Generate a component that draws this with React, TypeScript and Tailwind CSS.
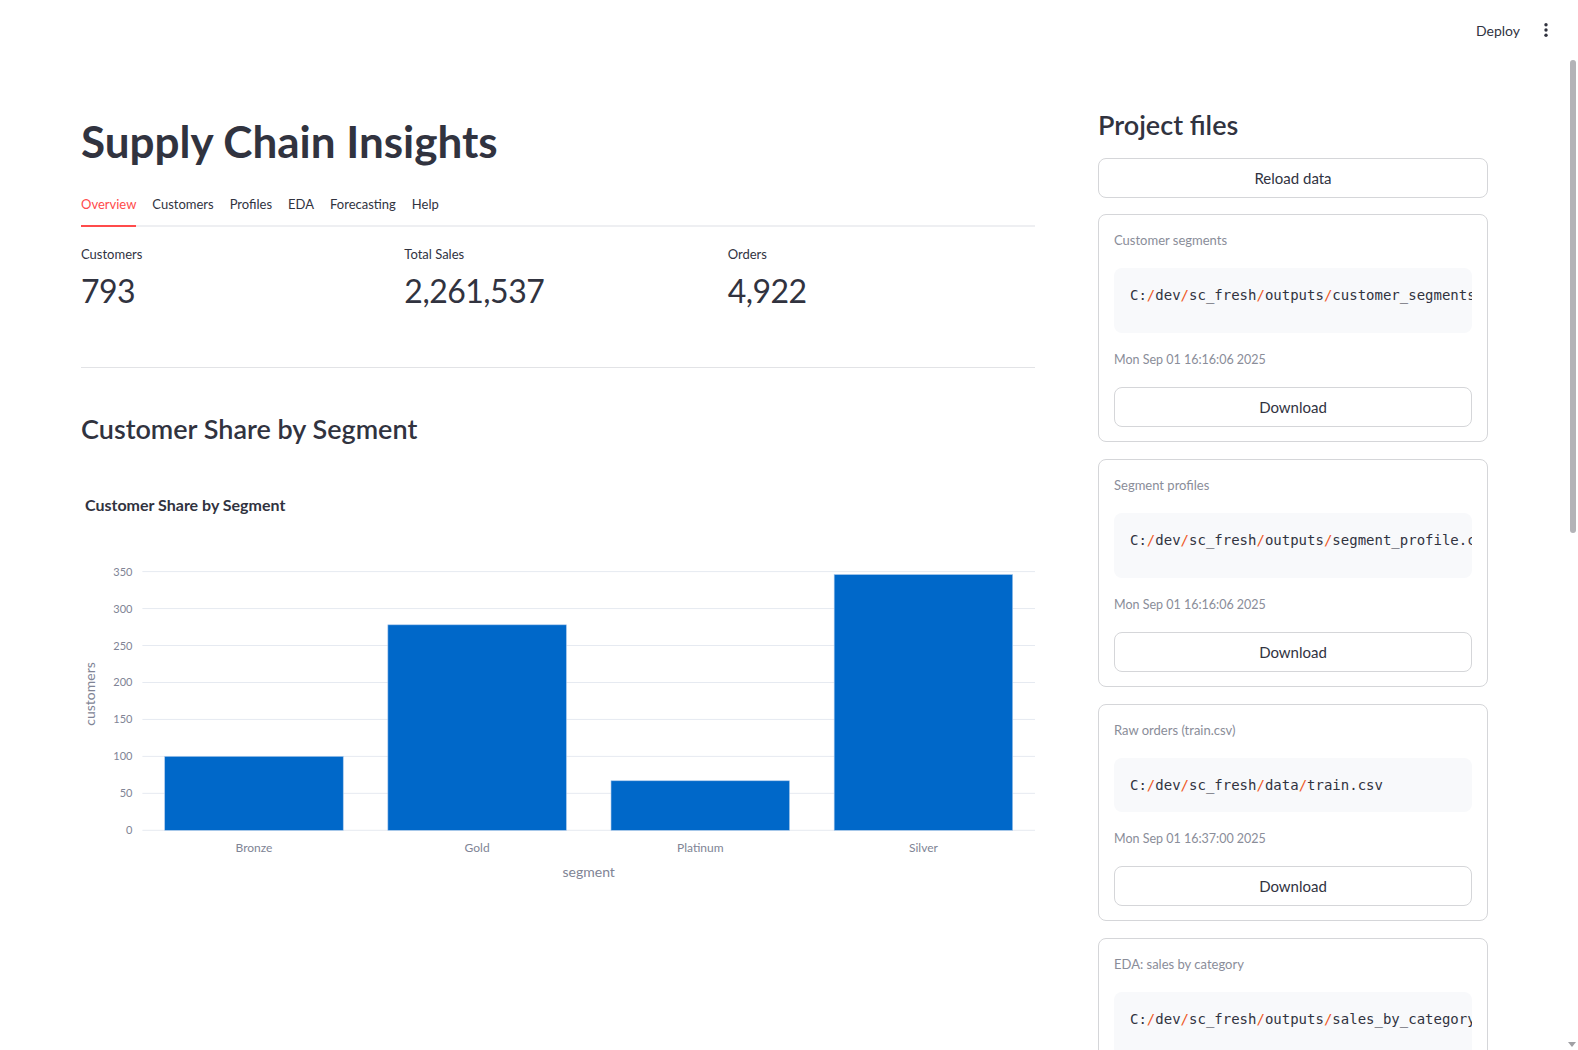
import { useState } from "react";

const sans = { fontFamily: '"Source Sans Pro", Lato, "Noto Sans", sans-serif' };
const mono = { fontFamily: '"DejaVu Sans Mono", "Liberation Mono", monospace' };

const tabs = ["Overview", "Customers", "Profiles", "EDA", "Forecasting", "Help"];

const metrics = [
    { label: "Customers", value: "793" },
    { label: "Total Sales", value: "2,261,537" },
    { label: "Orders", value: "4,922" },
];

const segments = [
    { name: "Bronze", count: 100 },
    { name: "Gold", count: 278 },
    { name: "Platinum", count: 67 },
    { name: "Silver", count: 346 },
];

const files = [
    { title: "Customer segments", path: "C:/dev/sc_fresh/outputs/customer_segments.csv", date: "Mon Sep 01 16:16:06 2025", scroll: true },
    { title: "Segment profiles", path: "C:/dev/sc_fresh/outputs/segment_profile.csv", date: "Mon Sep 01 16:16:06 2025", scroll: true },
    { title: "Raw orders (train.csv)", path: "C:/dev/sc_fresh/data/train.csv", date: "Mon Sep 01 16:37:00 2025", scroll: false },
    { title: "EDA: sales by category", path: "C:/dev/sc_fresh/outputs/sales_by_category.csv", date: "Mon Sep 01 16:16:06 2025", scroll: true },
];

// slashes in the path get the orange highlight
const PathText = ({ path }: { path: string }) => {
    const parts = path.split("/");
    return (
        <>
            {parts.map((p, i) => (
                <span key={i}>
                    {i > 0 && <span className="text-[#ef5a28]">/</span>}
                    {p}
                </span>
            ))}
        </>
    );
};

const Chart = () => {
    const base = 350.3;
    const scale = 258.7 / 350;
    const left = 61.4;
    const band = (954 - left) / 4;
    const ticks = [0, 50, 100, 150, 200, 250, 300, 350];
    return (
        <svg width="954" height="410" className="block" style={sans}>
            <text x="4" y="31" fontSize="16" fontWeight="700" fill="#31333f">Customer Share by Segment</text>
            {ticks.map((t) => (
                <g key={t}>
                    <line x1={left} x2="954" y1={base - t * scale} y2={base - t * scale} stroke="#e6eaf1" strokeWidth="1" />
                    <text x="51.5" y={base - t * scale + 4} fontSize="11" fill="#808495" textAnchor="end">{t}</text>
                </g>
            ))}
            {segments.map((s, i) => {
                const x = left + i * band + band * 0.1;
                const h = s.count * scale;
                return (
                    <g key={s.name}>
                        <rect x={x} y={base - h} width={band * 0.8} height={h} fill="#0068c9" stroke="#a8c8ec" strokeWidth="0.6" />
                        <text x={left + i * band + band / 2} y="371.5" fontSize="12" fill="#808495" textAnchor="middle">{s.name}</text>
                    </g>
                );
            })}
            <text x={(left + 954) / 2} y="396.5" fontSize="14" fill="#808495" textAnchor="middle">segment</text>
            <text transform="translate(14 214) rotate(-90)" fontSize="14" fill="#808495" textAnchor="middle">customers</text>
        </svg>
    );
};

const App = () => {
    const [active, setActive] = useState(0);
    return (
        <div className="relative h-[1050px] overflow-hidden bg-white text-[#31333f]" style={sans}>
            <header className="flex h-[60px] items-center justify-end gap-[24px] pr-[30px]">
                <span className="text-[14px]">Deploy</span>
                <svg width="4" height="14" viewBox="0 0 4 14">
                    <circle cx="2" cy="1.8" r="1.7" fill="#31333f" />
                    <circle cx="2" cy="7" r="1.7" fill="#31333f" />
                    <circle cx="2" cy="12.2" r="1.7" fill="#31333f" />
                </svg>
            </header>

            <div className="flex gap-[63px] pl-[81px]">
                <main className="w-[954px]">
                    <h1 className="mt-[55px] text-[44px] font-bold leading-[53px]">Supply Chain Insights</h1>
                    <div className="mt-[26px] flex gap-4 border-b-2 border-[#eeeff2]">
                        {tabs.map((t, i) => (
                            <button
                                key={t}
                                onClick={() => setActive(i)}
                                className={`-mb-[2px] border-b-2 pb-[11px] text-[13px] leading-[20px] ${i === active ? "border-[#ff4b4b] text-[#ff4b4b]" : "border-transparent text-[#31333f]"}`}
                            >
                                {t}
                            </button>
                        ))}
                    </div>
                    <div className="mt-[15px] grid grid-cols-3 gap-4">
                        {metrics.map((m) => (
                            <div key={m.label}>
                                <div className="text-[13px] leading-[24px]">{m.label}</div>
                                <div className="mt-[1px] text-[32px] leading-[48px] tracking-[-0.5px]">{m.value}</div>
                            </div>
                        ))}
                    </div>
                    <hr className="mt-[52px] border-t border-[#e2e3e6]" />
                    <h3 className="mt-[43px] text-[27px] font-semibold leading-[36px]">Customer Share by Segment</h3>
                    <div className="mt-[33px]">
                        <Chart />
                    </div>
                </main>

                <aside className="w-[390px]">
                    <h2 className="mt-[45px] text-[27px] font-semibold leading-[40px]">Project files</h2>
                    <button className="mt-[13px] flex h-[40px] w-full items-center justify-center rounded-lg border border-[#d5d6d9] text-[15px]">
                        Reload data
                    </button>
                    <div className="mt-[16px] flex flex-col gap-[17px]">
                        {files.map((f) => (
                            <div key={f.title} className="rounded-lg border border-[#d5d6d9] px-[15px] pb-[14px] pt-[15px]">
                                <div className="text-[13px] leading-[20px] text-[#8a8d99]">{f.title}</div>
                                <div
                                    className={`mt-[18px] overflow-hidden whitespace-nowrap rounded-lg bg-[#f8f9fb] pl-4 text-[14px] ${f.scroll ? "pb-[27px] pt-[16px]" : "py-[16px]"}`}
                                    style={mono}
                                >
                                    <div className="leading-[22px]"><PathText path={f.path} /></div>
                                </div>
                                <div className="mt-[17px] text-[12.5px] leading-[20px] text-[#8a8d99]">{f.date}</div>
                                <button className="mt-[17px] flex h-[40px] w-full items-center justify-center rounded-lg border border-[#d5d6d9] text-[15px]">
                                    Download
                                </button>
                            </div>
                        ))}
                    </div>
                </aside>
            </div>

            <div className="absolute right-[2px] top-[60px] h-[473px] w-[6px] rounded-sm bg-[#b3b3b7]" />
            <svg className="absolute bottom-[3px] right-[2px]" width="8" height="5" viewBox="0 0 8 5">
                <path d="M0 0 L8 0 L4 5 Z" fill="#a0a0a4" />
            </svg>
        </div>
    );
};

export default App;
